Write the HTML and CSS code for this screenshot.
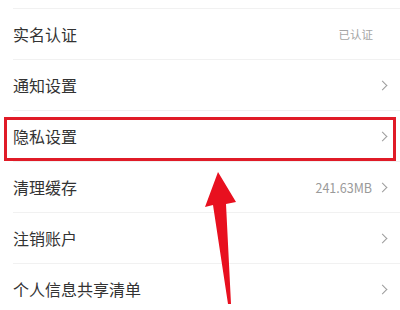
FILE: index.html
```html
<!DOCTYPE html>
<html lang="zh">
<head>
<meta charset="utf-8">
<link rel="stylesheet" href="styles.css">
</head>
<body>
<div class="page">
  <ul class="list">
    <li class="row"><span class="label">实名认证</span><span class="value plain">已认证</span></li>
    <li class="row"><span class="label">通知设置</span><span class="chev"></span></li>
    <li class="row"><span class="label">隐私设置</span><span class="chev"></span></li>
    <li class="row"><span class="label">清理缓存</span><span class="value">241.63MB</span><span class="chev"></span></li>
    <li class="row"><span class="label">注销账户</span><span class="chev"></span></li>
    <li class="row"><span class="label">个人信息共享清单</span><span class="chev"></span></li>
  </ul>
  <div class="highlight"></div>
  <svg class="arrow" width="50" height="140" viewBox="0 0 50 140">
    <path d="M18 2 L5 37 L13 35 L28 134 L31 134 L26 34 L36 32 Z" fill="#e8101f"/>
  </svg>
</div>
</body>
</html>
```
FILE: styles.css
```css
html, body {
  margin: 0;
  padding: 0;
  background: #fff;
}
.page {
  position: relative;
  width: 400px;
  height: 310px;
  overflow: hidden;
  font-family: "Noto Sans CJK SC", "Noto Sans", sans-serif;
}
.list {
  list-style: none;
  margin: 0;
  padding: 8px 0 0 13px;
}
.row {
  display: flex;
  align-items: center;
  height: 50px;
  border-top: 1px solid #f1f1f1;
  padding-right: 11px;
}
.label {
  flex: 1;
  font-size: 16px;
  color: #333;
}
.value {
  font-size: 12.5px;
  color: #9a9a9a;
  margin-right: 7px;
}
.value.plain {
  margin-right: 16px;
  font-size: 11.5px;
  color: #a5a5a5;
}
.chev {
  width: 6px;
  height: 6px;
  border-top: 1.3px solid #9c9c9c;
  border-right: 1.3px solid #9c9c9c;
  transform: rotate(45deg);
  margin-right: 3px;
}
.highlight {
  position: absolute;
  left: 4px;
  top: 117px;
  width: 386px;
  height: 38px;
  border: 3px solid #e01b27;
}
.arrow {
  position: absolute;
  left: 200px;
  top: 170px;
}
```
